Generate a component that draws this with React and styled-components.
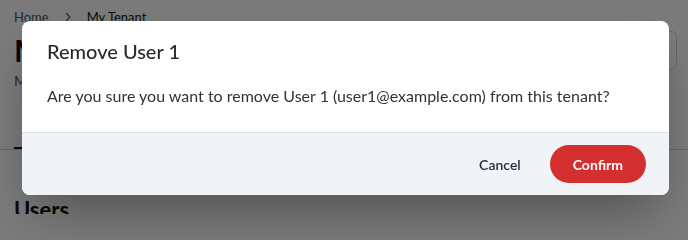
import React from "react";
import styled, { createGlobalStyle } from "styled-components";

const Global = createGlobalStyle`
  html, body { margin: 0; padding: 0; background: #ffffff; }
  body { font-family: Lato, "Noto Sans", Arial, sans-serif; color: #1f2328; }
  * { box-sizing: border-box; }
`;

const Page = styled.div`
  padding: 8px 11px 0 14px;
  height: 214px;
  overflow: hidden;
`;

const Breadcrumb = styled.nav`
  display: flex;
  align-items: center;
  gap: 13px;
  font-size: 13px;
  line-height: 18px;
`;

const Crumb = styled.span`
  color: ${(p) => (p.$current ? "#111827" : "#4b5563")};
`;

const ChevronIcon = styled.svg`
  width: 12px;
  height: 12px;
  color: #4b5563;
  flex-shrink: 0;
`;

const HeaderRow = styled.div`
  display: flex;
  justify-content: space-between;
  align-items: flex-start;
  margin-top: 4px;
`;

const PageTitle = styled.h1`
  margin: 0;
  font-size: 31px;
  line-height: 40px;
  font-weight: 700;
  color: #111;
`;

const OutlineButton = styled.button`
  width: 120px;
  height: 39px;
  margin-top: 1px;
  border: 1px solid #cfd3d8;
  border-radius: 6px;
  background: #fff;
`;

const Subtitle = styled.p`
  margin: 1px 0 0;
  font-size: 14px;
  line-height: 20px;
  color: #4b5563;
`;

const Tabs = styled.div`
  display: flex;
  margin: 56px -11px 0 -14px;
  padding-left: 14px;
  border-bottom: 1px solid #d1d5db;
`;

const Tab = styled.div`
  width: 80px;
  height: 2px;
  background: #111827;
`;

const Section = styled.h2`
  margin: 46px 0 0;
  font-size: 22px;
  line-height: 28px;
  font-weight: 700;
  color: #111;
`;

const Overlay = styled.div`
  position: fixed;
  inset: 0;
  background: rgba(0, 0, 0, 0.52);
  display: flex;
  align-items: flex-start;
  padding: 21px 19px 0 22px;
`;

const Dialog = styled.div`
  width: 100%;
  background: #ffffff;
  border-radius: 8px;
  overflow: hidden;
  box-shadow: 0 25px 50px -12px rgba(0, 0, 0, 0.35);
`;

const DialogBody = styled.div`
  padding: 16px 25px 24px;
`;

const DialogTitle = styled.h2`
  margin: 0;
  font-size: 20px;
  line-height: 28px;
  font-weight: 500;
  color: #2b2b2b;
`;

const DialogText = styled.p`
  margin: 19px 0 0;
  font-size: 16px;
  line-height: 24px;
  color: #333333;
`;

const Footer = styled.div`
  display: flex;
  justify-content: flex-end;
  align-items: center;
  gap: 29px;
  padding: 12px 23px 12px 25px;
  background: #f1f4f7;
  border-top: 1px solid #dde1e5;
`;

const Button = styled.button`
  font-family: Lato, "Noto Sans", Arial, sans-serif;
  font-size: 14px;
  font-weight: ${(p) => (p.$primary ? 700 : 600)};
  height: 38px;
  border: none;
  cursor: pointer;
  border-radius: 19px;
  padding: ${(p) => (p.$primary ? "0 23px" : "0")};
  min-width: ${(p) => (p.$primary ? "95px" : "auto")};
  background: ${(p) => (p.$primary ? "#d32f2f" : "transparent")};
  color: ${(p) => (p.$primary ? "#ffffff" : "#2a2a40")};
`;

export default function App() {
  return (
    <>
      <Global />
      <Page>
        <Breadcrumb>
          <Crumb>Home</Crumb>
          <ChevronIcon viewBox="0 0 24 24" fill="none" stroke="currentColor" strokeWidth="2.2" strokeLinecap="round" strokeLinejoin="round">
            <path d="M9 5l7 7-7 7" />
          </ChevronIcon>
          <Crumb $current>My Tenant</Crumb>
        </Breadcrumb>
        <HeaderRow>
          <PageTitle>My Tenant</PageTitle>
          <OutlineButton />
        </HeaderRow>
        <Subtitle>Manage users of this tenant</Subtitle>
        <Tabs>
          <Tab />
        </Tabs>
        <Section>Users</Section>
      </Page>
      <Overlay>
        <Dialog role="dialog" aria-modal="true">
          <DialogBody>
            <DialogTitle>Remove User 1</DialogTitle>
            <DialogText>
              Are you sure you want to remove User 1 (user1@example.com) from this tenant?
            </DialogText>
          </DialogBody>
          <Footer>
            <Button>Cancel</Button>
            <Button $primary>Confirm</Button>
          </Footer>
        </Dialog>
      </Overlay>
    </>
  );
}
